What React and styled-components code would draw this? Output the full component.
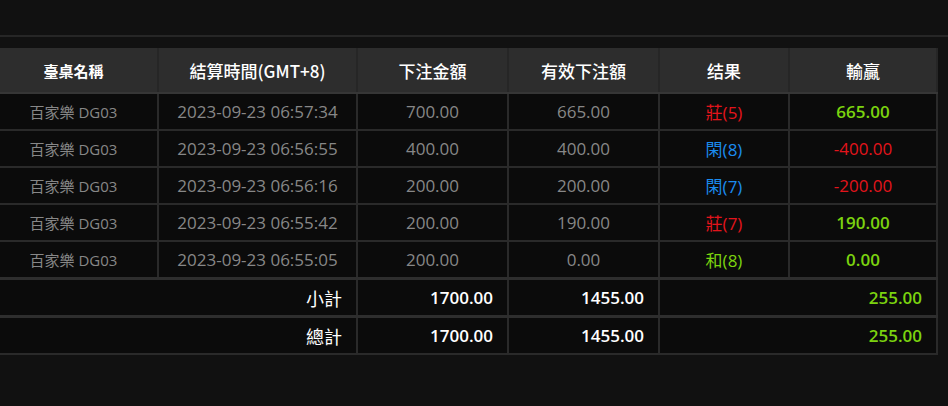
import styled, { createGlobalStyle } from "styled-components";

const GlobalStyle = createGlobalStyle`
  html, body {
    margin: 0;
    padding: 0;
    background: #111111;
    overflow: hidden;
  }
  body {
    font-family: "Open Sans", "Noto Sans CJK TC", sans-serif;
  }
`;

const Page = styled.div`
  width: 948px;
  height: 406px;
  background: #111111;
  display: flex;
  flex-direction: column;
`;

const TopBar = styled.div`
  height: 35px;
  border-bottom: 2px solid #262626;
  flex-shrink: 0;
`;

const Wrap = styled.div`
  padding-top: 11px;
  margin-left: -10px;
  width: 949px;
`;

const Table = styled.table`
  border-collapse: collapse;
  table-layout: fixed;
  width: 947px;
  background: #0b0b0b;
  font-family: "Open Sans", "Noto Sans CJK TC", sans-serif;
`;

const Th = styled.th`
  height: 44px;
  padding: 0;
  background: #2d2d2d;
  color: #ffffff;
  font-family: "Noto Sans CJK TC", sans-serif;
  font-size: ${(p) => (p.$small ? "15px" : "17px")};
  font-weight: ${(p) => (p.$small ? 700 : 500)};
  text-align: center;
  border-left: 2px solid #262626;
  border-right: 2px solid #262626;
  border-bottom: 2px solid #363636;
  &:first-child {
    border-left: none;
  }
`;

const Td = styled.td`
  height: 35px;
  padding: 0 ${(p) => (p.$right ? "14px" : "0")};
  color: ${(p) => p.$color || "#878787"};
  font-size: ${(p) => (p.$small ? "15px" : "17px")};
  font-weight: ${(p) => (p.$bold ? 600 : 400)};
  text-align: ${(p) => (p.$right ? "right" : "center")};
  border: 2px solid #2a2a2a;
  border-top: none;
  white-space: nowrap;
  &:first-child {
    border-left: none;
  }
`;

const Label = styled(Td)`
  font-family: "Noto Sans CJK TC", sans-serif;
  font-size: 18px;
  color: #ffffff;
`;

const TotalRow = styled.tr`
  border-top: 3px solid #2e2e2e;
`;

const Result = styled.span`
  color: ${(p) => p.$color};
`;

const RED = "#e3141b";
const GREEN = "#7bd30f";

const COLORS = {
  莊: RED,
  閑: "#1b8bef",
  和: GREEN,
};

const rows = [
  { time: "2023-09-23 06:57:34", bet: "700.00", valid: "665.00", r: "莊", n: 5, win: "665.00" },
  { time: "2023-09-23 06:56:55", bet: "400.00", valid: "400.00", r: "閑", n: 8, win: "-400.00" },
  { time: "2023-09-23 06:56:16", bet: "200.00", valid: "200.00", r: "閑", n: 7, win: "-200.00" },
  { time: "2023-09-23 06:55:42", bet: "200.00", valid: "190.00", r: "莊", n: 7, win: "190.00" },
  { time: "2023-09-23 06:55:05", bet: "200.00", valid: "0.00", r: "和", n: 8, win: "0.00" },
];

const widths = [168, 199, 151, 151, 130, 148];

export default function App() {
  return (
    <Page>
      <GlobalStyle />
      <TopBar />
      <Wrap>
        <Table>
          <colgroup>
            {widths.map((w, i) => (
              <col key={i} style={{ width: w }} />
            ))}
          </colgroup>
          <thead>
            <tr>
              <Th $small>臺桌名稱</Th>
              <Th>結算時間(GMT+8)</Th>
              <Th>下注金額</Th>
              <Th>有效下注額</Th>
              <Th>结果</Th>
              <Th>輸贏</Th>
            </tr>
          </thead>
          <tbody>
            {rows.map((row) => {
              const loss = row.win.startsWith("-");
              return (
                <tr key={row.time}>
                  <Td $small>百家樂 DG03</Td>
                  <Td>{row.time}</Td>
                  <Td>{row.bet}</Td>
                  <Td>{row.valid}</Td>
                  <Td>
                    <Result $color={COLORS[row.r]}>
                      {row.r}({row.n})
                    </Result>
                  </Td>
                  <Td $bold={!loss} $color={loss ? RED : GREEN}>
                    {row.win}
                  </Td>
                </tr>
              );
            })}
            <TotalRow>
              <Label colSpan={2} $right>小計</Label>
              <Td $right $bold $color="#ffffff">1700.00</Td>
              <Td $right $bold $color="#ffffff">1455.00</Td>
              <Td colSpan={2} $right $bold $color={GREEN}>255.00</Td>
            </TotalRow>
            <TotalRow>
              <Label colSpan={2} $right>總計</Label>
              <Td $right $bold $color="#ffffff">1700.00</Td>
              <Td $right $bold $color="#ffffff">1455.00</Td>
              <Td colSpan={2} $right $bold $color={GREEN}>255.00</Td>
            </TotalRow>
          </tbody>
        </Table>
      </Wrap>
    </Page>
  );
}
